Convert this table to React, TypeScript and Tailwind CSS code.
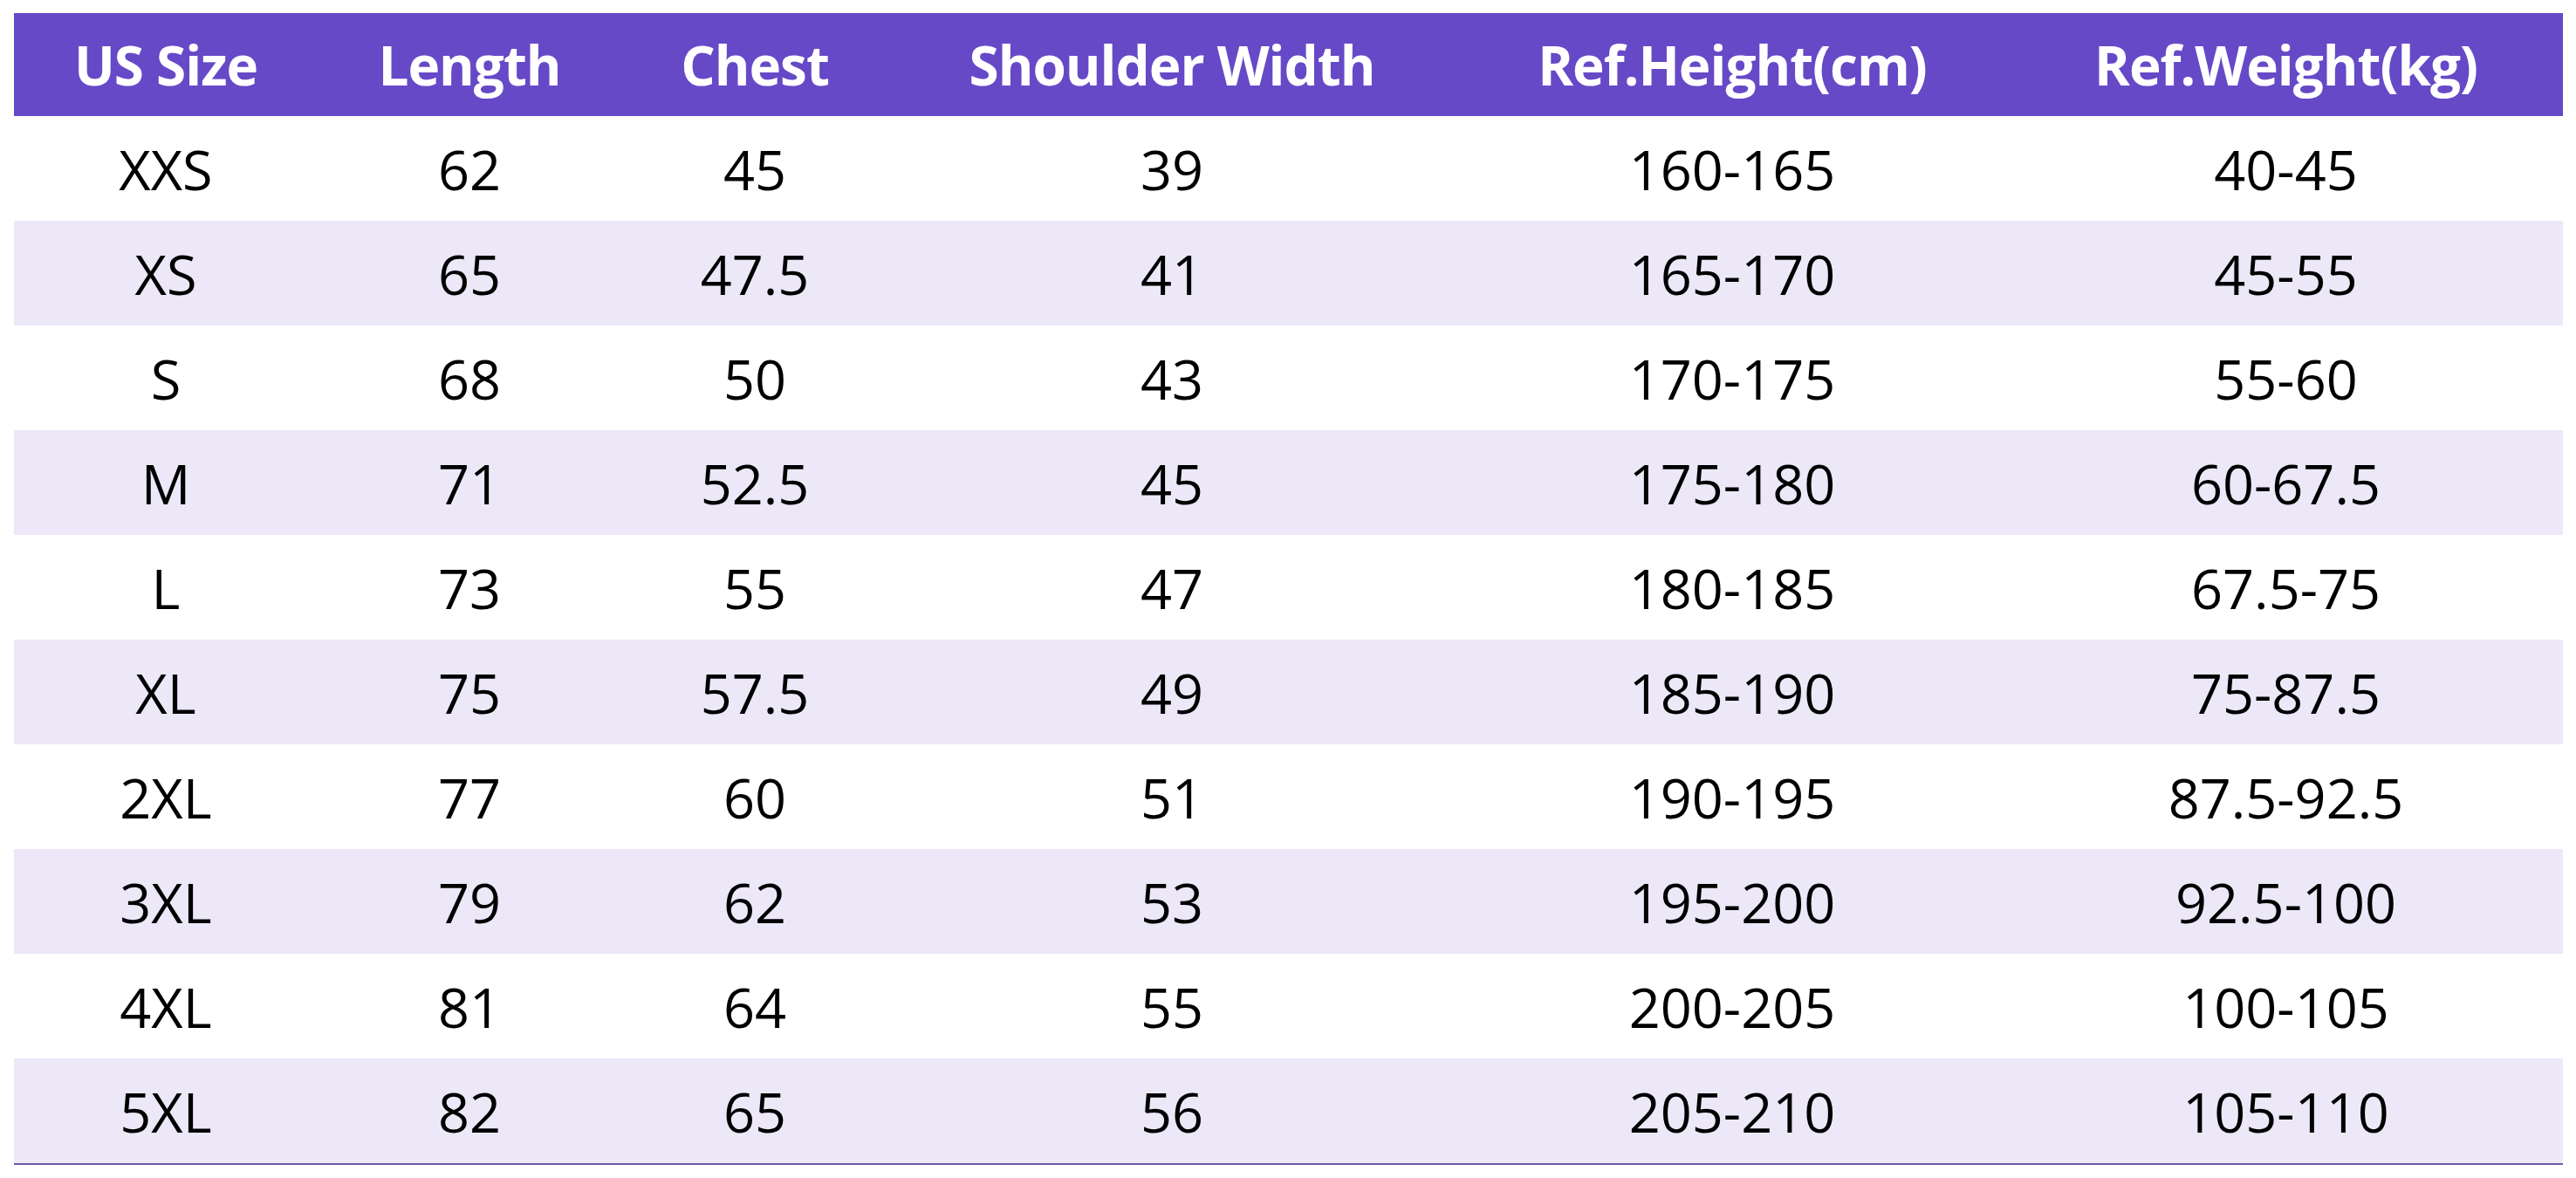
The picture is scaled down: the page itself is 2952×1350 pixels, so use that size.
const headers = [
  "US Size",
  "Length",
  "Chest",
  "Shoulder Width",
  "Ref.Height(cm)",
  "Ref.Weight(kg)",
];

const rows = [
  ["XXS", "62", "45", "39", "160-165", "40-45"],
  ["XS", "65", "47.5", "41", "165-170", "45-55"],
  ["S", "68", "50", "43", "170-175", "55-60"],
  ["M", "71", "52.5", "45", "175-180", "60-67.5"],
  ["L", "73", "55", "47", "180-185", "67.5-75"],
  ["XL", "75", "57.5", "49", "185-190", "75-87.5"],
  ["2XL", "77", "60", "51", "190-195", "87.5-92.5"],
  ["3XL", "79", "62", "53", "195-200", "92.5-100"],
  ["4XL", "81", "64", "55", "200-205", "100-105"],
  ["5XL", "82", "65", "56", "205-210", "105-110"],
];

const cols = "grid grid-cols-[348px_348px_306px_650px_634px_635px]";

const App = () => {
  return (
    <main className="w-[2952px] h-[1350px] bg-white pt-[15px] pl-[16px] font-['Open_Sans','Noto_Sans',sans-serif]">
      <section className="w-[2921px] border-b-2 border-[#6b5ba5]">
        <div className={`${cols} h-[118px] bg-[#6649c7] text-white font-bold text-[62px] tracking-[-1px] leading-none`}>
          {headers.map((h) => (
            <div key={h} className="flex items-center justify-center whitespace-nowrap">
              {h}
            </div>
          ))}
        </div>
        {rows.map((row, i) => (
          <div
            key={row[0]}
            className={`${cols} h-[120px] text-black text-[63px] leading-none ${
              i % 2 === 1 ? "bg-[#ece8f8]" : "bg-white"
            }`}
          >
            {row.map((cell, j) => (
              <div key={j} className="flex items-center justify-center whitespace-nowrap">
                {cell}
              </div>
            ))}
          </div>
        ))}
      </section>
    </main>
  );
};

export default App;
